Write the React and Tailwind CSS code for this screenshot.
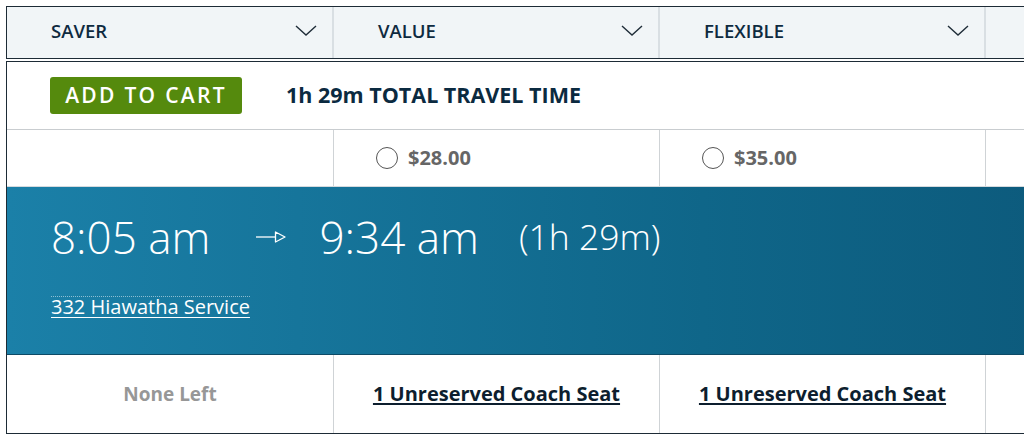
import React from "react";

const font = { fontFamily: '"Open Sans", "Noto Sans", sans-serif' };

function Chevron() {
  return (
    <svg width="22" height="11" viewBox="0 0 22 11" fill="none" className="shrink-0">
      <path d="M1 1 L11 10 L21 1" stroke="#1f2d38" strokeWidth="1.4" />
    </svg>
  );
}

function Arrow() {
  return (
    <svg width="30" height="12" viewBox="0 0 30 12" fill="none" className="shrink-0">
      <path d="M0 6 H19" stroke="white" strokeWidth="1.3" />
      <path d="M19.5 1 L29 6 L19.5 11 Z" stroke="white" strokeWidth="1.3" strokeLinejoin="round" />
    </svg>
  );
}

function Radio() {
  return <span className="inline-block w-[22px] h-[22px] rounded-full border-[1.5px] border-[#555] bg-white shrink-0" />;
}

const cols = ["w-[327px]", "w-[326px]", "w-[326px]", "w-[326px]"];

export default function App() {
  const headers = ["SAVER", "VALUE", "FLEXIBLE", ""];

  return (
    <div className="w-[1024px] h-[442px] overflow-hidden bg-white" style={font}>
      <div className="pt-[6px] pl-[6px] w-[1400px]">
        {/* fare class header */}
        <div className="flex h-[53px] bg-[#f1f5f7] border-[1.5px] border-r-0 border-[#1d2b36]">
          {headers.map((h, i) => (
            <div
              key={i}
              className={`${cols[i]} flex items-center justify-between pl-[44px] pr-[15px] pb-[4px] border-r-2 border-[#d9dfe3]`}
            >
              <span className="text-[18.5px] font-semibold text-[#0e2a3f]">{h}</span>
              <Chevron />
            </div>
          ))}
        </div>

        {/* trip card */}
        <div className="mt-[2px] border-[1.5px] border-r-0 border-[#1d2b36]">
          <div className="flex items-center h-[68px] pl-[43px] border-b border-[#c9cdd0]">
            <button className="h-[37px] w-[192px] rounded-[3px] bg-[#558a0d] text-white text-[21px] font-semibold tracking-[2.3px] flex items-center justify-center">
              ADD TO CART
            </button>
            <span className="ml-[44px] text-[21.5px] font-bold text-[#0b2a40]">1h 29m TOTAL TRAVEL TIME</span>
          </div>

          <div className="flex h-[57px] border-b border-[#d5dade]">
            <div className={`${cols[0]} border-r border-[#cfd3d6]`} />
            {["$28.00", "$35.00"].map((p, i) => (
              <div key={p} className={`${cols[i + 1]} border-r border-[#cfd3d6] flex items-center pl-[42px] gap-[10px]`}>
                <Radio />
                <span className="text-[20px] font-bold text-[#666]">{p}</span>
              </div>
            ))}
            <div className={`${cols[3]}`} />
          </div>

          <div className="h-[168px] bg-gradient-to-r from-[#1b80a8] via-[#0f6689] to-[#0a4f70] pl-[44px] pt-[22px] text-white border-b border-[#0d4a66]">
            <div className="flex items-center h-[56px]">
              <span className="text-[44px] font-light leading-none">8:05 am</span>
              <span className="ml-[46px] mr-[33px]"><Arrow /></span>
              <span className="text-[44px] font-light leading-none">9:34 am</span>
              <span className="ml-[40px] text-[35.5px] font-light leading-none">(1h 29m)</span>
            </div>
            <div className="mt-[31px]">
              <a href="#" className="inline-block text-[20px] leading-[20px] underline underline-offset-[3px] decoration-1 border-t border-dotted border-white/50">
                332 Hiawatha Service
              </a>
            </div>
          </div>

          <div className="flex h-[78px]">
            <div className={`${cols[0]} border-r border-[#cfd3d6] flex items-center justify-center`}>
              <span className="text-[19px] font-bold text-[#979797]">None Left</span>
            </div>
            {[1, 2].map((i) => (
              <div key={i} className={`${cols[i]} border-r border-[#cfd3d6] flex items-center justify-center`}>
                <a href="#" className="text-[20px] font-bold text-[#0d1e2e] underline underline-offset-2 decoration-[1.5px]">
                  1 Unreserved Coach Seat
                </a>
              </div>
            ))}
            <div className={`${cols[3]}`} />
          </div>
        </div>
      </div>
    </div>
  );
}
